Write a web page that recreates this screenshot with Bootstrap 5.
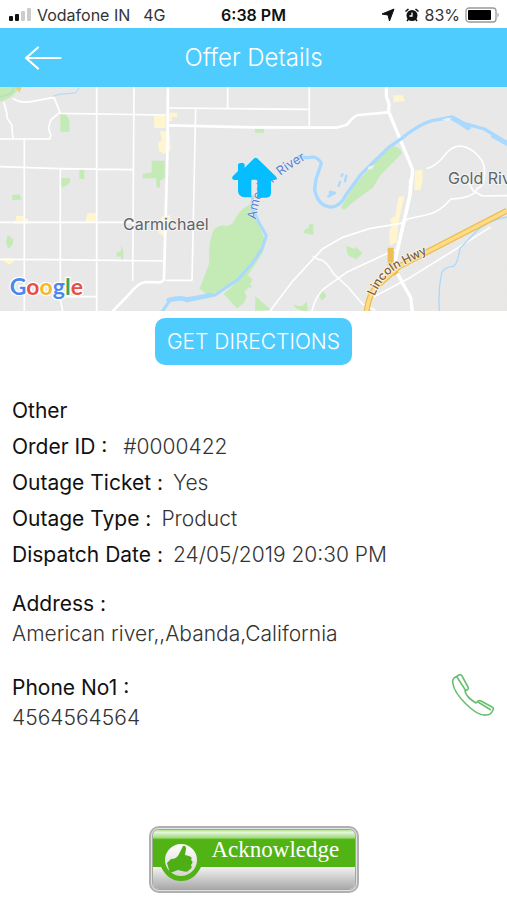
<!DOCTYPE html>
<html lang="en">
<head>
<meta charset="utf-8">
<meta name="viewport" content="width=device-width, initial-scale=1">
<title>Offer Details</title>
<link href="https://cdn.jsdelivr.net/npm/bootstrap@5.3.0/dist/css/bootstrap.min.css" rel="stylesheet">
<style>
  body { font-family: Inter, "Liberation Sans", sans-serif; background: #fff; color: #111; }
  svg { display: block; }
  .status-bar { height: 28px; padding: 2px 8px 0; font-size: 16px; line-height: 24px; font-family: Inter, sans-serif; color: #333; }
  .status-side { flex: 1 1 0; gap: 5px; }
  .status-time { font-weight: 600; color: #111; font-size: 16px; }
  .title-bar { height: 59px; background: #4fccfe; color: #fff; padding: 0 24px; }
  .title-side { flex: 1 1 0; }
  .title-text { font-size: 24px; line-height: 32px; font-weight: 300; }
  .directions { padding-top: 7px; }
  .btn-directions { background: #4fccfe; color: #fff; border: 0; border-radius: 10px; font-size: 21px; line-height: 23px; font-weight: 300; padding: 12px; }
  .btn-directions:hover { background: #36bdf2; color: #fff; }
  .details { padding: 28px 12px 0; font-size: 21px; }
  .detail-row { line-height: 36px; gap: 10px; }
  .detail-row dt, .detail-block dt { font-weight: 400; }
  .detail-row dd, .detail-block dd { font-weight: 300; color: #333; margin: 0; }
  .detail-block { line-height: 30px; }
  .order-row { gap: 16px; }
  .ack-area { padding: 93px 0 8px; }
  .btn-ack { position: relative; width: 210px; height: 67px; padding: 0; border: 0; background: none; color: #fff; }
  .btn-ack-label { position: absolute; left: 63px; top: 9px; font: 23px/30px "Liberation Serif", serif; }
</style>
<script src="https://cdn.jsdelivr.net/npm/bootstrap@5.3.0/dist/js/bootstrap.bundle.min.js"></script>
</head>
<body>
<div class="status-bar d-flex align-items-center">
  <div class="status-side d-flex align-items-center">
    <svg width="24" height="14" viewBox="0 0 24 14" aria-hidden="true">
      <rect x="1" y="8" width="4" height="5" rx="1" fill="#111"/><rect x="7" y="6" width="4" height="7" rx="1" fill="#111"/>
      <rect x="13" y="3" width="4" height="10" rx="1" fill="#ccc"/><rect x="19" y="0" width="4" height="13" rx="1" fill="#ccc"/>
    </svg>
    <span>Vodafone IN</span><span class="ms-2">4G</span>
  </div>
  <span class="status-time">6:38 PM</span>
  <div class="status-side d-flex align-items-center justify-content-end">
    <svg width="14" height="14" viewBox="0 0 14 14" aria-hidden="true"><path d="M13 1 8.500 13 7 7 1 6Z" fill="#111" stroke="#111" stroke-linejoin="round"/></svg>
    <svg class="ms-1" width="16" height="14" viewBox="0 0 16 14" aria-hidden="true"><circle cx="8" cy="7.500" r="5.500" fill="#111"/><path d="M1.500 3.500 4.500 1M14.500 3.500 11.500 1M3 13l1.500-2M13 13l-1.500-2" stroke="#111" stroke-width="1.600"/><path d="M8 4.500V8H5.500" fill="none" stroke="#fff" stroke-width="1.300"/></svg>
    <span>83%</span>
    <svg width="34" height="16" viewBox="0 0 34 16" aria-hidden="true"><rect x="1" y="1" width="30" height="14" rx="3" fill="#fff" stroke="#999" stroke-width="1.300"/><rect x="3" y="3" width="23" height="10" rx="1" fill="#000"/><path d="M32.500 5.500q2.500 2.500 0 5z" fill="#999"/></svg>
  </div>
</div>

<header class="title-bar d-flex align-items-center">
  <div class="title-side">
    <button type="button" class="btn p-0 border-0" aria-label="Back">
      <svg width="38" height="24" viewBox="0 0 38 24" fill="none" stroke="#fff" stroke-width="2.200" stroke-linecap="round" stroke-linejoin="round" aria-hidden="true"><path d="M36.500 12H2M14 1.500 2 12l12 10.500"/></svg>
    </button>
  </div>
  <h1 class="title-text m-0">Offer Details</h1>
  <div class="title-side"></div>
</header>

<main>
  <svg class="w-100 h-auto" viewBox="0 3 1521 672" role="img" aria-label="Map of Carmichael and Gold River">
    <rect y="3" width="1521" height="672" fill="#e8e8e8"/>
    <path d="M1235 675l75-65 90-60 120-95v220z" fill="#eae8e6"/>
    <g fill="#c4ebb5">
      <path d="M0 3h58q-10 28-58 45zM181 83h16l11 18v36h-27zM455 224h39v51l-14 9v20l-10 1-2-28h-40v-13l27-5zM238 249h15v30h-15zM183 277l27-1v14l-22 15-5-8zM37 326h22l7 15-30 1zM23 447l16 12v15l-14 15-7-22zM364 475l6 23v22h-6l-2-9-12 1v-13l13-3z"/>
      <path d="M759 352q-30 10-48 37-15 35-35 30-25-3-37 17-15 40-11 95l-29 77q15 15 32 20 15-10 34-14l68-33 26-36 30-46 3-44-22-58z"/>
      <path d="M671 624l68-60 19 17-8 14 7 8-12 2-12 12 7 16-8 17-20 17-13-13z"/>
      <path d="M765 128h27v12h-27zM1022 366l42-69 63-69 48-47q20-4 32 19l-66 68-23 38q-50 33-84 65z"/>
      <path d="M929 412l11 4v31l-28-6 1-10 12-5zM1038 479l13 5 13 5 4-7 19 20-18 18-26-13zM954 623l14-13 11 20-13 14zM766 631l48 41-49 3zM880 657l27 4 13-15 4 29h-16l-20-8z"/>
    </g>
    <g fill="#fff5ce">
      <path d="M462 88h35v38h-34zM508 80h23v14h-15v12h-9zM480 136l28-2 4 58-15 12-20-8-3-25 11-10zM48 390l24-1 1 9 12 1v14H43v-10h6zM262 381l29 1-1 29h-32v-12zM5 518l34-1 4 8-13 11-16-8zM484 392l26-5 2 15-16 54-22-17z"/>
      <path d="M1195 333l18-3-18 85-5 54-20 9-3-39 8-19-5-20 16-9zM1245 254l22-3 1 31-6 29-19 2zM1180 28h28l7 18-35 3z"/>
    </g>
    <g fill="none" stroke="#fff" stroke-linecap="round" stroke-linejoin="round">
      <g stroke-width="5">
        <path d="M40 38q25 15 58 8l64-12 18 45-25 20q-16 26-2 48l-4 12H0M12 50l9 33q-3 15 14 32l4 44M180 82l315 5M0 242l180 6 217 3M0 409h490M0 520l150 1 340 4M73 162v513M181 250v390l7 35M290 3v672M402 3l-4 580M504 66l420 4M683 3v64M928 3v120M587 68l-11 515h-78M191 632h99"/>
        <path d="M810 675l70-92 88-95 60-34 80-26 95-16 20-13 55-12q40-7 75-48 70-2 79-32 20-5 20-32 10-45-28-76-50-38-85 3-30 40-57 45"/>
        <path d="M936 675q10-45 37-68l70-50 76-35 65-30M940 511l16 10q18-4 46 44l42 38 44 52 36 17M1120 633l110-58 165-103 75-48"/>
        <path d="M1400 280l20 35 27 15 74-1"/>
      </g>
      <path d="M504 3l-2 210-10 360q0 17-16 16l-40-1q-22 3-47 35l-50 52M508 118l251 6 250 1 32-9q21-28 35-29l88-8" stroke-width="8"/>
      <path d="M1159 3v28l8 22-1 24 72 174-8 76-43 188-1 35 28 53 18 31 5 41" stroke-width="10"/>
    </g>
    <path d="M0 32q28-4 38-17l4-12" stroke="#b9dec1" stroke-width="4" fill="none"/>
    <path d="M46 3l20-1-8 18z" fill="#efcf74"/>
    <g fill="none" stroke="#a9d9ff" stroke-linecap="round" stroke-linejoin="round">
      <path d="M484 680q18-24 28-41h38l95-12 68-46 40-44 34-50 12-38-25-45-18-40 2-32" stroke-width="9"/>
      <path d="M506 642q40-10 55 0l72-15" stroke-width="14"/>
      <path d="M895 213l27 2 20-2q14 4 22 19l-16 48-4 31q10 49 48 52 31-2 45-35l45-62 36-35 48-47 38-26q65-53 110-57l43-8 37 20 59 16 73 44" stroke-width="10"/>
      <path d="M1355 96l20 10 30 20M1480 150l41 22" stroke-width="14"/>
      <path d="M160 30q20-8 45-7l22-3 10-14" stroke-width="3"/>
      <path d="M1521 393q-58 10-91 42l-50 52q-9 56-24 55-19 0-31 18-11 52-7 115" stroke-width="4"/>
      <path d="M985 331l20-10-15-4v14M1016 300l4-12M1024 270l4-5M1035 286l4-17" stroke-width="7"/>
    </g>
    <path d="M1325 101l18-5h12l-9 10zM1106 242l18-5-8 12-14 2z" fill="#e8f1f7"/>
    <path d="M1100 675q8-63 46-88l50-45 325-168M1172 485v55M1172 540l17 25" fill="none" stroke="#edbd57" stroke-width="18"/>
    <path d="M1100 675q8-63 46-88l50-45 325-168" fill="none" stroke="#ffdd84" stroke-width="10"/>
    <path d="M1232 280l-2 47-43 188v25" fill="none" stroke="#fff" stroke-width="10"/>
    <defs>
      <path id="river-low" d="M768 401q5-55 33-108"/>
      <path id="river-high" d="M818 293q34-38 106-76"/>
      <path id="highway" d="M1124 631q26-64 78-89l95-48"/>
    </defs>
    <g font-family="Inter, sans-serif" font-weight="500">
      <g font-size="38" font-weight="400" fill="#5b83cc" stroke="#e8f1fa" stroke-width="3" paint-order="stroke">
        <text><textPath href="#river-low">Ameri</textPath></text>
        <text><textPath href="#river-high">n River</textPath></text>
      </g>
      <text font-size="36" fill="#795e43" stroke="#fff5e0" stroke-width="5" paint-order="stroke"><textPath href="#highway">Lincoln Hwy</textPath></text>
      <g font-size="48" font-weight="400" fill="#606466" stroke="#f3f3f3" stroke-width="6" paint-order="stroke">
        <text x="369" y="433">Carmichael</text>
        <text x="1344" y="293">Gold Riv</text>
      </g>
    </g>
    <path fill="#06bdff" d="M714 235q4-5 10-4 5-3 10 4v10l27-27q6-5 12 0l54 53q6 8-3 11h-11v39q0 14-15 14h-26v-51q-1-3-5-3h-9q-4 0-4 3v50h-20q-20-2-20-20v-32h-13q-8-5-2-12l15-15z"/>
    <text x="29" y="628" font-family="Lato, sans-serif" font-size="69" font-weight="700" stroke="#fff" stroke-width="8" paint-order="stroke" stroke-linejoin="round"><tspan fill="#4c87ee">G</tspan><tspan fill="#e84f43">o</tspan><tspan fill="#f4b82c">o</tspan><tspan fill="#4c87ee">g</tspan><tspan fill="#3da65a">l</tspan><tspan fill="#e84f43">e</tspan></text>
  </svg>

  <div class="directions d-flex justify-content-center">
    <button type="button" class="btn btn-directions">GET DIRECTIONS</button>
  </div>

  <dl class="details m-0">
    <div class="detail-row"><dt>Other</dt></div>
    <div class="detail-row order-row d-flex"><dt>Order ID :</dt><dd>#0000422</dd></div>
    <div class="detail-row d-flex"><dt>Outage Ticket :</dt><dd>Yes</dd></div>
    <div class="detail-row d-flex"><dt>Outage Type :</dt><dd>Product</dd></div>
    <div class="detail-row d-flex"><dt>Dispatch Date :</dt><dd>24/05/2019 20:30 PM</dd></div>
    <div class="detail-block mt-3"><dt>Address :</dt><dd>American river,,Abanda,California</dd></div>
    <div class="detail-block mt-4 d-flex justify-content-between align-items-start">
      <div><dt>Phone No1 :</dt><dd>4564564564</dd></div>
      <dd><a href="tel:4564564564" aria-label="Call 4564564564">
        <svg width="44" height="44" viewBox="0 0 44 44" fill="none" stroke="#69bf70" stroke-width="1.600" stroke-linejoin="round" aria-hidden="true"><path d="M3 5 8 2q2-1 3 1l6 11q1 2-1 3l-2 1q1 6 11 12l2-2q1-1 3 0l11 6q2 1 1 3-2 5-7 5Q27 43 15 31 3 19 2 11 1 7 3 5ZM6 4l9 14M27 29l13 8"/></svg>
      </a></dd>
    </div>
  </dl>

  <div class="ack-area d-flex justify-content-center">
    <button type="button" class="btn-ack">
      <svg width="210" height="67" viewBox="0 0 210 67" aria-hidden="true">
        <defs>
          <linearGradient id="gloss" x2="0" y2="1"><stop stop-color="#7ccc4e"/><stop offset=".08" stop-color="#e5f8da"/><stop offset=".18" stop-color="#a3dc82"/><stop offset=".22" stop-color="#52b315"/><stop offset="1" stop-color="#50b313"/></linearGradient>
          <linearGradient id="silver" x2="0" y2="1"><stop stop-color="#fff"/><stop offset=".62" stop-color="#f3f3f3"/><stop offset="1" stop-color="#a9a9a9"/></linearGradient>
          <linearGradient id="disc" x2="0" y2="1"><stop stop-color="#fff"/><stop offset="1" stop-color="#d5d5d5"/></linearGradient>
          <clipPath id="face"><rect x="4" y="4" width="202" height="59" rx="6"/></clipPath>
        </defs>
        <rect x="1" y="1" width="208" height="65" rx="9" fill="#e2e2e2" stroke="#b0b0b0" stroke-width="2"/>
        <g clip-path="url(#face)">
          <rect x="4" y="4" width="202" height="59" fill="url(#silver)"/>
          <path d="M4 2h202v39H52Q45 55 32 55T12 41H4z" fill="url(#gloss)"/>
        </g>
        <rect x="3.500" y="3.500" width="203" height="60" rx="6" fill="none" stroke="#a0aa9a"/>
        <circle cx="32" cy="34" r="16" fill="url(#disc)"/>
        <path d="M18 37l4-4q6 0 8-5l4-8q3-1 3 3l-1 6 4 1q4 1 2 4 3 2 0 5 2 3-2 5-1 3-7 1l-4-1-8 3z" fill="#4daf15"/>
      </svg>
      <span class="btn-ack-label">Acknowledge</span>
    </button>
  </div>
</main>
</body>
</html>
